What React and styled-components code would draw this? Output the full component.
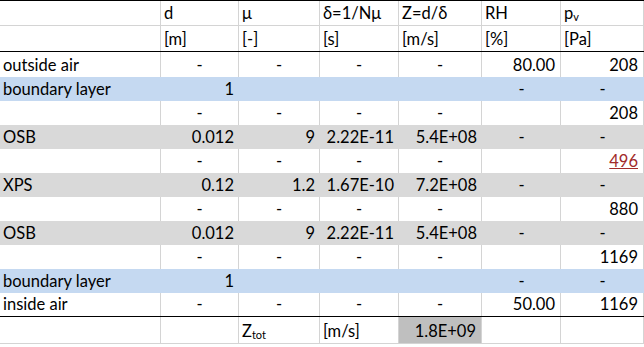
import React from 'react';
import styled, { createGlobalStyle } from 'styled-components';

const cols = '161px 78px 81px 79px 83px 79px 83px';
const grid = '#d4d4d4';

const fills = {
  blue: '#c5d9f1',
  gray: '#d9d9d9',
};

const rows = [
  { label: 'outside air', cells: ['-', '-', '-', '-', '80.00', '208'] },
  { label: 'boundary layer', fill: 'blue', cells: ['1', '', '', '', '-', '-'] },
  { label: '', cells: ['-', '-', '-', '-', '', '208'] },
  { label: 'OSB', fill: 'gray', cells: ['0.012', '9', '2.22E-11', '5.4E+08', '-', '-'] },
  { label: '', cells: ['-', '-', '-', '-', '', '496'], link: 5 },
  { label: 'XPS', fill: 'gray', cells: ['0.12', '1.2', '1.67E-10', '7.2E+08', '-', '-'] },
  { label: '', cells: ['-', '-', '-', '-', '', '880'] },
  { label: 'OSB', fill: 'gray', cells: ['0.012', '9', '2.22E-11', '5.4E+08', '-', '-'] },
  { label: '', cells: ['-', '-', '-', '-', '', '1169'] },
  { label: 'boundary layer', fill: 'blue', cells: ['1', '', '', '', '-', '-'] },
  { label: 'inside air', cells: ['-', '-', '-', '-', '50.00', '1169'] },
];

export default function App() {
  return (
    <>
      <Global />
      <Sheet>
        <Row $h={26} $topRule $head>
          <Cell $lines />
          <Cell $lines $left>d</Cell>
          <Cell $lines $left>μ</Cell>
          <Cell $lines $left>δ=1/Nμ</Cell>
          <Cell $lines $left>Z=d/δ</Cell>
          <Cell $lines $left>RH</Cell>
          <Cell $lines $left><span>p<Sub>v</Sub></span></Cell>
        </Row>
        <Row $h={26} $bottomRule>
          <Cell $lines />
          <Cell $lines $left>[m]</Cell>
          <Cell $lines $left>[-]</Cell>
          <Cell $lines $left>[s]</Cell>
          <Cell $lines $left>[m/s]</Cell>
          <Cell $lines $left>[%]</Cell>
          <Cell $lines $left>[Pa]</Cell>
        </Row>
        {rows.map((r, i) => (
          <Row key={i} $h={i === 0 ? 25 : 24} $fill={r.fill} $bottomRule={i === rows.length - 1}>
            <Cell $lines={!r.fill} $left>{r.label}</Cell>
            {r.cells.map((c, j) => (
              <Cell key={j} $lines={!r.fill} $center={c === '-'}>
                {r.link === j ? <Link>{c}</Link> : c}
              </Cell>
            ))}
          </Row>
        ))}
        <Row $h={27} $grid>
          <Cell $lines />
          <Cell $lines />
          <Cell $lines $left><span>Z<Sub>tot</Sub></span></Cell>
          <Cell $lines $left>[m/s]</Cell>
          <Cell $lines $shade>1.8E+09</Cell>
          <Cell $lines />
          <Cell $lines />
        </Row>
      </Sheet>
    </>
  );
}

const Global = createGlobalStyle`
  body {
    margin: 0;
    background: #fff;
    font-family: Lato, "Open Sans", sans-serif;
    color: #000;
  }
`;

const Sheet = styled.div`
  width: 644px;
  overflow: hidden;
`;

const Row = styled.div`
  display: grid;
  grid-template-columns: ${cols};
  height: ${(p) => p.$h}px;
  box-sizing: border-box;
  background: ${(p) => (p.$fill ? fills[p.$fill] : '#fff')};
  border-top: ${(p) => (p.$topRule ? '1px solid #000' : 'none')};
  border-bottom: ${(p) => (p.$bottomRule ? '1px solid #000' : p.$grid ? `1px solid ${grid}` : 'none')};
  & > div {
    border-bottom: ${(p) => (p.$head ? `1px solid ${grid}` : 'none')};
  }
`;

const Cell = styled.div`
  box-sizing: border-box;
  display: flex;
  align-items: flex-end;
  justify-content: ${(p) => (p.$left ? 'flex-start' : p.$center ? 'center' : 'flex-end')};
  padding: 0 ${(p) => (p.$center ? '0' : '5px')} 3px ${(p) => (p.$left ? '3px' : '0')};
  border-right: ${(p) => (p.$lines ? `1px solid ${grid}` : 'none')};
  background: ${(p) => (p.$shade ? '#bfbfbf' : 'transparent')};
  font-size: 16.5px;
  line-height: 18px;
  white-space: nowrap;
`;

const Sub = styled.sub`
  font-size: 11px;
  vertical-align: -2px;
  line-height: 0;
`;

const Link = styled.span`
  color: #a12a2a;
  text-decoration: underline;
`;
